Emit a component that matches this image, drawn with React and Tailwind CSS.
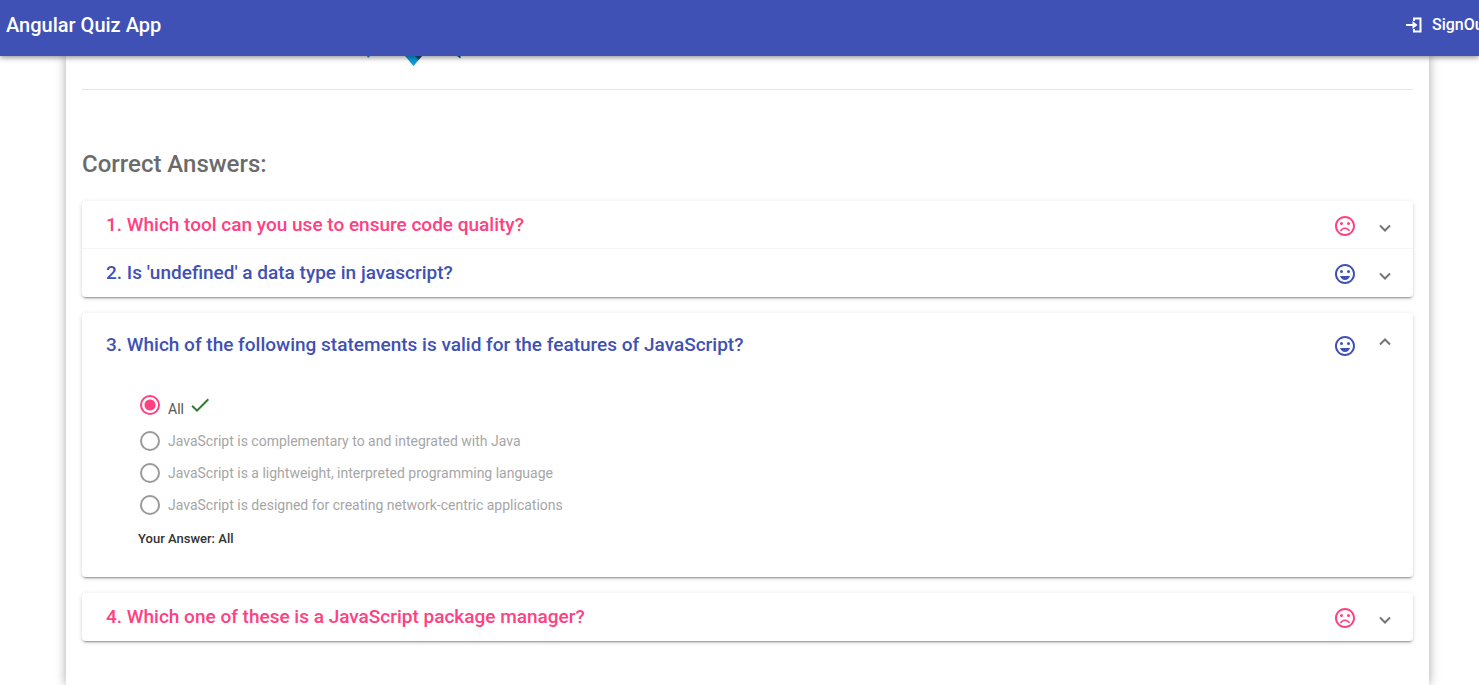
import { MdCheck } from "react-icons/md";

const OPTIONS = [
  "All",
  "JavaScript is complementary to and integrated with Java",
  "JavaScript is a lightweight, interpreted programming language",
  "JavaScript is designed for creating network-centric applications",
];

function FaceIcon({ happy }) {
  return (
    <svg viewBox="0 0 24 24" className="size-6 fill-current" aria-hidden="true">
      <path d="M11.99 2C6.47 2 2 6.48 2 12s4.47 10 9.99 10C17.52 22 22 17.52 22 12S17.52 2 11.99 2zM12 20c-4.42 0-8-3.58-8-8s3.58-8 8-8 8 3.58 8 8-3.58 8-8 8z" />
      <circle cx="15.5" cy="9.5" r="1.5" />
      <circle cx="8.5" cy="9.5" r="1.5" />
      {happy ? (
        <path d="M12 18c2.28 0 4.22-1.66 5-4H7c.78 2.34 2.72 4 5 4z" />
      ) : (
        <path d="M12 13.500c-2.330 0-4.310 1.460-5.110 3.500h1.700c.7-1.190 1.950-2 3.410-2s2.710.81 3.410 2h1.700c-.8-2.040-2.780-3.500-5.110-3.500z" />
      )}
    </svg>
  );
}

function LoginIcon() {
  return (
    <svg viewBox="0 0 16 16" className="size-4 fill-none stroke-current stroke-2" aria-hidden="true">
      <path d="M8 4V1.500h6.500v13H8V12" />
      <path d="M0 8h8" />
      <path d="M6.500 4l5 4-5 4z" className="fill-current stroke-none" />
    </svg>
  );
}

function Chevron({ up }) {
  return (
    <svg viewBox="0 0 12 8" className="h-2 w-3 fill-none stroke-[#757575] stroke-2" aria-hidden="true">
      <path d={up ? "M1 6.500 6 1.500l5 5" : "M1 1.500 6 6.500l5-5"} />
    </svg>
  );
}

function QuestionHeader({ correct, open, children }) {
  return (
    <h3>
      <button
        type="button"
        aria-expanded={!!open}
        className={
          "flex w-full items-center pr-[22px] pl-6 text-left text-[19px] font-medium " +
          (open ? "h-16 " : "h-12 ") +
          (correct ? "text-[#3f51b5]" : "text-[#ff4081]")
        }
      >
        <span className="grow">{children}</span>
        <span className="flex items-center gap-[22px] pt-0.5">
          <FaceIcon happy={correct} />
          <span className={open ? "pb-2" : "pt-1"}>
            <Chevron up={open} />
          </span>
        </span>
      </button>
    </h3>
  );
}

const PANEL =
  "rounded bg-white shadow-[0_3px_1px_-2px_rgba(0,0,0,0.2),0_2px_2px_0_rgba(0,0,0,0.14),0_1px_5px_0_rgba(0,0,0,0.12)]";

export default function App() {
  return (
    <div className="flex h-screen flex-col overflow-hidden bg-white font-[Roboto,sans-serif] text-[#212121]">
      <header className="relative z-10 flex h-14 shrink-0 items-center justify-between overflow-hidden bg-[#3f51b5] pb-1.5 pl-1.5 font-medium text-white shadow-[0_2px_5px_rgba(0,0,0,0.4)]">
        <h1 className="text-xl">Angular Quiz App</h1>
        <a href="#signout" className="-mr-2.5 flex items-center gap-2.5 text-base">
          <LoginIcon />
          SignOut
        </a>
      </header>

      <main className="mr-[50px] ml-[66px] grow px-4 shadow-[0_0_10px_rgba(0,0,0,0.35)]">
        <div className="h-[34px] border-b border-[#e6e6e6] pl-[283px]">
          <svg viewBox="0 0 100 10" className="h-2.5 w-[100px]" aria-hidden="true">
            <path d="M40 0h17l-8.500 10z" fill="#0d99dc" />
            <path d="M50 0h7l-3.500 4z" fill="#174c80" />
            <path d="M2 0h3L3 2z" fill="#2b88b8" />
            <path d="M92 0h3.500v2.500z" fill="#174c80" />
          </svg>
        </div>
        <h2 className="mt-[58px] text-2xl leading-8 font-medium text-[#6b6b6b]">Correct Answers:</h2>

        <div className="mt-[21px] flex flex-col gap-4">
          <div className={PANEL}>
            <QuestionHeader>1. Which tool can you use to ensure code quality?</QuestionHeader>
            <div className="-mt-px border-t border-[#f5f5f5]">
              <QuestionHeader correct>2. Is 'undefined' a data type in javascript?</QuestionHeader>
            </div>
          </div>

          <section className={PANEL}>
            <QuestionHeader correct open>
              3. Which of the following statements is valid for the features of JavaScript?
            </QuestionHeader>
            <div className="px-14 pt-3 pb-7">
              <fieldset className="flex flex-col pl-0.5">
                {OPTIONS.map((option, i) => (
                  <label
                    key={option}
                    className={
                      "flex h-8 items-center gap-2 text-sm " +
                      (i === 0 ? "mb-1 text-[#555]" : "text-[#a6a6a6]")
                    }
                  >
                    <input
                      type="radio"
                      name="answer-3"
                      defaultChecked={i === 0}
                      disabled={i !== 0}
                      className="size-5 shrink-0 appearance-none rounded-full border-2 border-[#9a9a9a] bg-white checked:border-[#ff4081] checked:bg-[radial-gradient(circle,#ff4081_5px,transparent_6px)]"
                    />
                    <span className={i === 0 ? "pt-2" : ""}>{option}</span>
                    {i === 0 && <MdCheck className="-ml-1 size-6 text-[#2e7d32]" />}
                  </label>
                ))}
              </fieldset>
              <p className="mt-2 text-[13px] leading-5 font-medium text-[#333]">Your Answer: All</p>
            </div>
          </section>

          <section className={PANEL}>
            <QuestionHeader>4. Which one of these is a JavaScript package manager?</QuestionHeader>
          </section>
        </div>
      </main>
    </div>
  );
}
